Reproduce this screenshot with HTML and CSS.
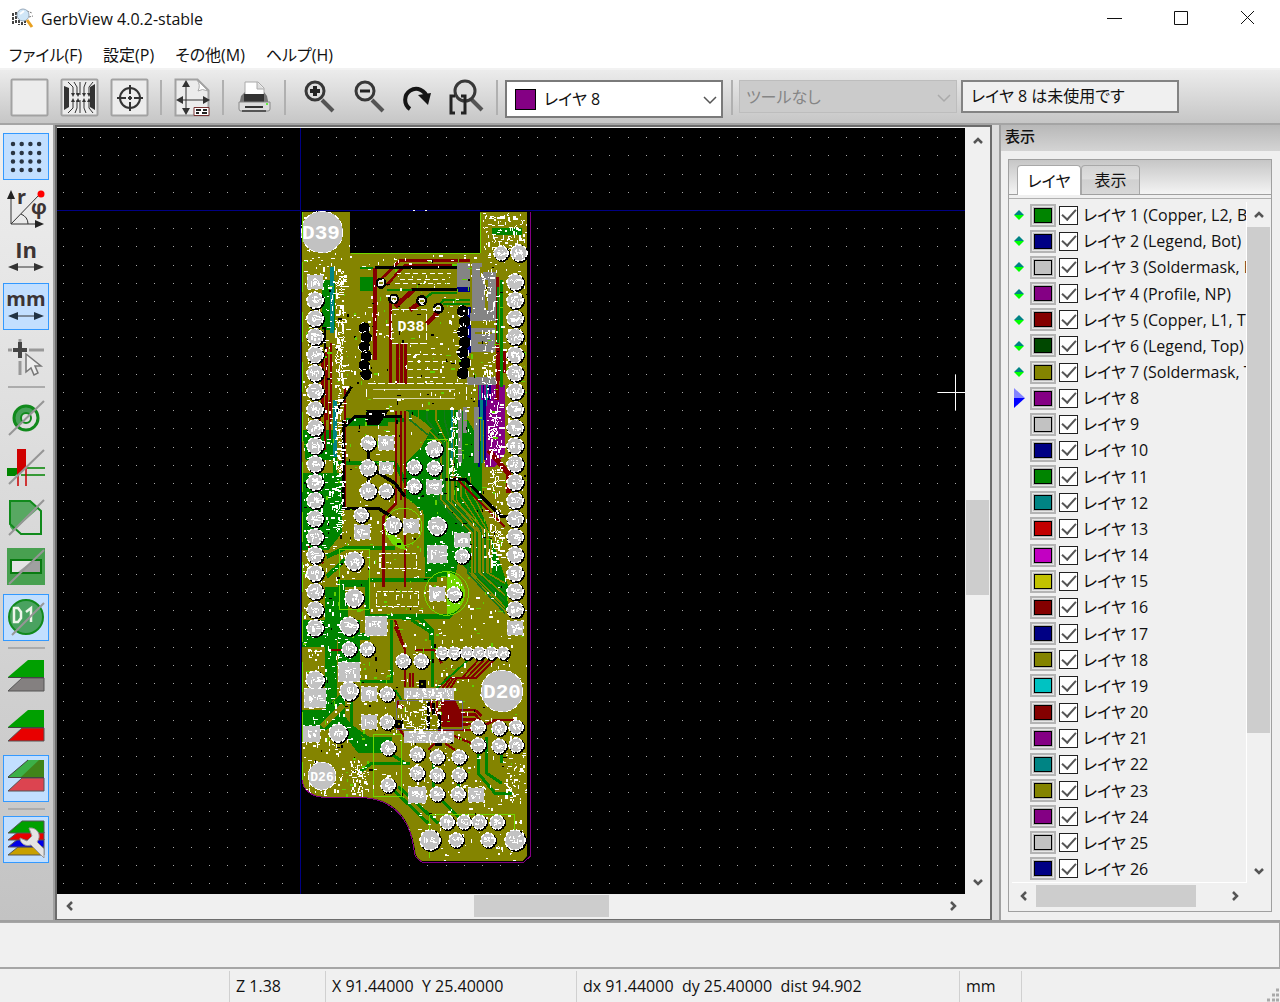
FILE: index.html
```
<!DOCTYPE html>
<html lang="ja">
<head>
<meta charset="utf-8">
<title>GerbView 4.0.2-stable</title>
<link rel="stylesheet" href="styles.css">
</head>
<body>
<header class="titlebar">
  <svg class="app-icon" width="22" height="22" viewBox="0 0 22 22"><path d="M1 5v11M4 4v12M7 8v9M10 10v7M13 12v5" stroke="#444" stroke-width="2" stroke-dasharray="3 1"/><path d="M15 3l5 2M17 9l4-1" stroke="#777" stroke-dasharray="2 1"/><circle cx="11" cy="7" r="6" fill="#cfe6f7" stroke="#9ab" /><path d="M8 6l4-3" stroke="#fff" stroke-width="2"/><path d="M15 12l5 7" stroke="#e8a020" stroke-width="3"/></svg>
  <h1>GerbView 4.0.2-stable</h1>
  <div class="window-buttons">
    <button aria-label="最小化"><svg width="16" height="16"><path d="M0 7.500h15" /></svg></button>
    <button aria-label="最大化"><svg width="16" height="16"><path d="M1.500 0.500h13v13h-13z"/></svg></button>
    <button aria-label="閉じる"><svg width="16" height="16"><path d="M2 0l13 13M15 0L2 13"/></svg></button>
  </div>
</header>
<nav class="menubar">
  <button>ファイル(F)</button><button>設定(P)</button><button>その他(M)</button><button>ヘルプ(H)</button>
</nav>
<div class="toolbar">
  <button aria-label="レイヤを消去"><svg width="40" height="40"><rect class="tile" x="1.500" y="1.500" width="36" height="36" rx="1"/></svg></button>
  <button aria-label="ガーバーファイルを読込む"><svg width="40" height="40"><rect class="tile" x="1.500" y="1.500" width="36" height="36" rx="1"/><path d="M4 8l5 2v19l-5 3zM35 6l-5 3v20l5 3z" fill="#333"/><path class="ln" d="M8 4l5 5v8M14 4l3 5v8M20 4v13M26 4l-2 5v8M33 4l-4 5v8M8 35l5-5v-8M15 35l2-5v-8M20 35V22M26 35l-2-5v-8M33 35l-4-5v-8"/><path d="M11 15h4l-2 4zM16 15h4l-2 4zM22 15h4l-2 4zM27 15h4l-2 4zM11 24h4l-2-4zM16 24h4l-2-4zM22 24h4l-2-4zM27 24h4l-2-4z" fill="#333"/></svg></button>
  <button aria-label="ドリルファイルを読込む"><svg width="40" height="40"><rect class="tile" x="1.500" y="1.500" width="36" height="36" rx="1"/><g class="ln"><circle cx="20" cy="20" r="10" stroke-width="2"/><path stroke-width="2" d="M20 7v9M20 24v9M7 20h9M24 20h9M18 20h4M20 18v4"/></g></svg></button>
  <span class="vsep"></span>
  <button aria-label="ページ設定"><svg width="40" height="40"><path class="tile" d="M3.500 1.500h22l11 11v25h-33z"/><path d="M25 2q4 5 1 11q4-3 10 0z" fill="#fff" stroke="#aaa"/><path class="ln" stroke-width="2" d="M14 5v30M7 22h28"/><path d="M14 2l-4 7h8zM14 37l-4-7h8zM4 22l7-4v8zM38 22l-7-4v8z" fill="#333"/><path d="M22 29.500h15v8H22z" fill="#fff" stroke="#733"/><path d="M24 32h5M31 32h4M24 35h3M30 35h5" stroke="#222" stroke-width="2"/></svg></button>
  <span class="vsep"></span>
  <button aria-label="印刷"><svg width="40" height="40"><path d="M11 4h13l6 6v10H11z" fill="#fff" stroke="#aaa"/><path d="M23 4v7h7" fill="#ddd" stroke="#aaa"/><path d="M7 18l4-4v4h19v-4l3 4 2 10H5z" fill="#777"/><path d="M10 16h20v8H10z" fill="#333"/><path d="M5 24h31v7q0 2-2 2H7q-2 0-2-2z" fill="#ddd" stroke="#888"/><path d="M11 29h18" stroke="#333" stroke-width="2"/><path d="M8 33h24" stroke="#555" stroke-width="2"/><path d="M32 26h2" stroke="#6e4" stroke-width="2"/></svg></button>
  <span class="vsep"></span>
  <button aria-label="ズームイン"><svg class="zoom" width="40" height="40"><path d="M25 22l11 11" stroke="#555" stroke-width="4"/><circle cx="18" cy="13" r="9" fill="#ddd" stroke="#383838" stroke-width="3"/><path d="M13 13h10M18 8v10" stroke="#222" stroke-width="4"/></svg></button>
  <button aria-label="ズームアウト"><svg class="zoom" width="40" height="40"><path d="M25 22l11 11" stroke="#555" stroke-width="4"/><circle cx="18" cy="13" r="9" fill="#ddd" stroke="#383838" stroke-width="3"/><path d="M13 13h10" stroke="#222" stroke-width="3"/></svg></button>
  <button aria-label="再描画"><svg width="40" height="40"><path d="M14 31A11 11 0 1 1 31 20" fill="none" stroke="#151515" stroke-width="4"/><path d="M22 17l13-2-3 12z" fill="#151515"/></svg></button>
  <button aria-label="自動ズーム"><svg width="40" height="40"><path d="M25 21l11 11" stroke="#555" stroke-width="4"/><circle cx="19" cy="13" r="10" fill="#ddd" stroke="#383838" stroke-width="3"/><path d="M9 18H5v17h4M15 18h4v17h-4" fill="none" stroke="#222" stroke-width="3"/></svg></button>
  <span class="vsep"></span>
  <div class="combo layer-combo">
    <i class="combo-color"></i>
    <select aria-label="レイヤ"><option>レイヤ 8</option></select>
    <svg class="caret" width="14" height="10"><path d="M1 2l6 6 6-6"/></svg>
  </div>
  <span class="vsep"></span>
  <div class="combo tool-combo">
    <select aria-label="ツール" disabled><option>ツールなし</option></select>
    <svg class="caret" width="14" height="10"><path d="M1 2l6 6 6-6"/></svg>
  </div>
  <input class="layer-info" aria-label="レイヤ情報" readonly value="レイヤ 8 は未使用です">
</div>

<main>
  <aside class="options">
    <button class="on" aria-label="グリッド"><svg width="46" height="46"><path d="M10 10h27M10 19h27M10 27.500h27M10 36h27" stroke="#2a3542" stroke-width="4.500" stroke-linecap="round" stroke-dasharray="0 8.700"/></svg></button>
    <button aria-label="極座標"><svg width="46" height="46"><path class="ln" stroke-width="2" d="M8 10v30h28M8 40L37 10M18 30q7 3 7 10"/><path d="M8 6l-4 9h8zM41 40l-9-4v8z" fill="#222"/><circle cx="38" cy="10" r="3.500" fill="#f00"/><text x="14" y="20" font-size="20">r</text><text x="28" y="30" font-size="20">φ</text></svg></button>
    <button aria-label="インチ"><svg width="46" height="46"><text x="23" y="24" font-size="22" text-anchor="middle">In</text><path class="ln" stroke-width="2" d="M10 33h27"/><path d="M5 33l10-4v8zM41 33l-10-4v8z" fill="#333"/></svg></button>
    <button class="on" aria-label="ミリメートル"><svg width="46" height="46"><text x="23" y="22" font-size="20" text-anchor="middle">mm</text><path class="ln" stroke-width="2" d="M10 32h27"/><path d="M5 32l10-4v8zM41 32l-10-4v8z" fill="#234"/></svg></button>
    <button aria-label="カーソル形状"><svg width="46" height="46"><path d="M17 5v3M17 27v14M5 16h4M26 16h15" stroke="#999" stroke-width="3"/><path d="M17 8v16M10 16h14" stroke="#444" stroke-width="4"/><path d="M23 20v18l5-4 3 7 4-2-3-7h6z" fill="#eee" stroke="#777" stroke-width="1.500"/></svg></button>
    <span class="hsep"></span>
    <button aria-label="フラッシュパッド"><svg width="46" height="46"><path d="M14 33A13 13 0 0 1 33 14z" fill="#48a058"/><circle cx="23" cy="23" r="12" fill="none" stroke="#118a1c" stroke-width="3"/><circle cx="23" cy="23" r="5" fill="#ddd" stroke="#118a1c" stroke-width="2"/><path class="slash" d="M6 40L41 6"/></svg></button>
    <button aria-label="ライン"><svg width="46" height="46"><path d="M4 23h17L12 31H4z" fill="#008400"/><path d="M14 4h9v19l-9 9z" fill="#d00000"/><path d="M24 23h18M18 30h24" stroke="#008400" stroke-width="1.500"/><path d="M15 29v12M23 21v20" stroke="#c00" stroke-width="1.500"/><path class="slash" d="M6 39L41 5"/></svg></button>
    <button aria-label="ポリゴン"><svg width="46" height="46"><path d="M7 6h21l8 7L10 36l-3-4z" fill="#58a862"/><path d="M7 6h20l11 10v23H18L7 29z" fill="none" stroke="#118a1c" stroke-width="2"/><path class="slash" d="M6 40L41 5"/></svg></button>
    <button aria-label="ネガティブ"><svg width="46" height="46"><rect x="4" y="3" width="38" height="37" fill="#48a050"/><rect x="8" y="15" width="30" height="13" fill="#a0a0a0" stroke="#087a10" stroke-width="2"/><path d="M9 16h20L15 27H9z" fill="#e4e4e4"/><path class="slash" d="M6 39L41 5"/></svg></button>
    <button class="on" aria-label="Dコード"><svg width="46" height="46"><circle cx="23" cy="22" r="17" fill="#4aa260" stroke="#118a1c" stroke-width="2"/><path d="M11 13v14h4l3-4v-6l-3-4zM23 17l5-4v14" fill="none" stroke="#eef5ea" stroke-width="2.500"/><path class="slash" d="M9 40L41 8"/></svg></button>
    <span class="hsep"></span>
    <button aria-label="通常モード"><svg width="46" height="46"><path d="M5 35l14-13h22v13z" fill="#848080" stroke="#555"/><path d="M5 21L25 4h16v17z" fill="#00a000"/><path d="M5 21.500h36" stroke="#444"/></svg></button>
    <button aria-label="スタックモード"><svg width="46" height="46"><path d="M5 35l14-13h22v13z" fill="#e80000" stroke="#555"/><path d="M5 21L25 4h16v17z" fill="#00a000"/><path d="M5 21.500h36" stroke="#444"/></svg></button>
    <button class="on" aria-label="透過モード"><svg width="46" height="46"><path d="M5 35l14-13h22v13z" fill="#dc4450" stroke="#555"/><path d="M5 21L25 4h16v17z" fill="#3cb048"/><path d="M41 4h-5L18 21h23z" fill="#40841a"/><path d="M5 21.500h36M5 21L25 4" stroke="#444"/></svg></button>
    <span class="hsep"></span>
    <button class="on" aria-label="レイヤマネージャ"><svg width="46" height="46"><path d="M5 38l10-8h26v8z" fill="#c8a000" stroke="#555"/><path d="M5 30l10-8h26v8z" fill="#0000e8" stroke="#555"/><path d="M5 23l10-8h26v8z" fill="#e80000" stroke="#555"/><path d="M5 16L19 4h22v12z" fill="#00a000" stroke="#555"/><path d="M26 11c9-1 13 8 8 14l7 7v9L28 28c-6 2-11-2-11-7l7 3 5-5z" fill="#e4e4e4" stroke="#999"/></svg></button>
  </aside>

  <section class="view">
    <svg id="board" class="canvas" role="img" aria-label="ガーバービュー"></svg>
    <div class="scroll vertical"><button aria-label="上へ"><svg width="12" height="12"><path d="M2 8l4-4 4 4"/></svg></button><i></i><b></b><i></i><button aria-label="下へ"><svg width="12" height="12"><path d="M2 4l4 4 4-4"/></svg></button></div>
    <div class="scroll horizontal"><button aria-label="左へ"><svg width="12" height="12"><path d="M8 2L4 6l4 4"/></svg></button><i></i><b></b><i></i><button aria-label="右へ"><svg width="12" height="12"><path d="M4 2l4 4-4 4"/></svg></button></div>
  </section>

  <aside class="manager">
    <h2>表示</h2>
    <div class="notebook">
      <div class="tabs"><button class="active">レイヤ</button><button>表示</button></div>
      <div class="page">
        <ul id="layers" class="layers"></ul>
        <div class="scroll vertical"><button aria-label="上へ"><svg width="12" height="12"><path d="M2 8l4-4 4 4"/></svg></button><b></b><i></i><button aria-label="下へ"><svg width="12" height="12"><path d="M2 4l4 4 4-4"/></svg></button></div>
        <div class="scroll horizontal"><button aria-label="左へ"><svg width="12" height="12"><path d="M8 2L4 6l4 4"/></svg></button><b></b><i></i><button aria-label="右へ"><svg width="12" height="12"><path d="M4 2l4 4-4 4"/></svg></button></div>
      </div>
    </div>
  </aside>
</main>
<div class="messages"></div>
<footer class="status">
  <span></span><span>Z 1.38</span><span>X 91.44000&nbsp; Y 25.40000</span><span>dx 91.44000&nbsp; dy 25.40000&nbsp; dist 94.902</span><span>mm</span><span></span>
  <svg class="grip" width="14" height="14"><path d="M10 2h3M6 7h3M10 7h3M1 12h3M6 12h3M10 12h3" stroke="#aaa" stroke-width="3"/></svg>
</footer>
<script src="app.js"></script>
</body>
</html>
```
FILE: styles.css
```
* { box-sizing: border-box; }
body {
  margin: 0;
  min-height: 100vh;
  display: flex;
  flex-direction: column;
  background: #f0f0f0;
  color: #111;
  font: 16px/24px "Open Sans", "Noto Sans CJK JP", sans-serif;
  font-feature-settings: "palt";
}
button, select, input { font: inherit; font-feature-settings: inherit; color: inherit; }
button { border: 0; padding: 0; background: none; }
svg { display: block; }
.ln { fill: none; stroke: #333; stroke-width: 1; }

.titlebar { display: flex; align-items: center; height: 37px; padding-left: 12px; background: #fff; }
.titlebar h1 { margin: 0 0 0 7px; font-size: 16px; font-weight: 400; }
.window-buttons { display: flex; margin-left: auto; }
.window-buttons button { width: 66px; height: 37px; display: flex; align-items: center; justify-content: center; }
.window-buttons path { fill: none; stroke: #111; stroke-width: 1; }

.menubar { display: flex; gap: 21px; height: 31px; padding: 0 9px; background: #fff; }
.menubar button { height: 35px; white-space: nowrap; }

.toolbar {
  display: flex;
  align-items: flex-start;
  height: 57px;
  padding: 8px 0 0 5px;
  border-top: 2px solid #f2f2f2;
  border-bottom: 2px solid #a4a4a4;
  background: linear-gradient(#ececec, #c6c6c6);
}
.toolbar button { width: 50px; height: 40px; padding-left: 5px; flex: none; }
.tile { fill: #ececec; stroke: #a2a2a2; stroke-width: 2; }
.zoom { margin-left: 1px; }
.vsep { width: 12px; height: 35px; margin-top: 2px; flex: none; background: linear-gradient(#b0b0b0, #b0b0b0) center / 2px 100% no-repeat; }
.combo { position: relative; width: 218px; flex: none; }
.combo select { width: 100%; height: 100%; margin: 0; appearance: none; border-radius: 0; opacity: 1; }
.layer-combo { height: 38px; margin: 2px 3px 0 2px; }
.layer-combo select { padding-left: 37px; border: 2px solid #7a7a7a; background: #fff; }
.combo-color { position: absolute; left: 10px; top: 9px; width: 21px; height: 21px; border: 1px solid #000; background: #840084; }
.caret { position: absolute; right: 6px; top: 50%; margin-top: -4px; fill: none; stroke: #555; stroke-width: 1.500; }
.tool-combo { height: 33px; margin: 2px 4px 0 1px; }
.tool-combo select { padding-left: 6px; border: 1px solid #bdbdbd; background: #cbcbcb; color: #858585; }
.tool-combo .caret { stroke: #aaa; }
.layer-info { width: 218px; height: 33px; margin-top: 2px; padding: 0 8px 3px; border: 2px solid #838383; border-radius: 0; background: #f0f0f0; }

main { flex: 1; display: flex; min-height: 0; background: #dedede; border-bottom: 2px solid #a0a0a0; }
.options {
  width: 55px;
  flex: none;
  display: flex;
  flex-direction: column;
  gap: 3px;
  padding: 8px 3px;
  border-right: 2px solid #a0a0a0;
  background: linear-gradient(#efefef, #c3c3c3);
}
.options button { width: 46px; height: 47px; flex: none; border: 1px solid transparent; }
.options button svg { margin: 0 -1px; }
.options .on { border: 1px solid #3399ff; background: #c2dfff; }
.options text { font-weight: 700; fill: #3c3434; }
.slash { stroke: #969696; stroke-width: 2; fill: none; }
.hsep { height: 2px; margin: 3px 5px; background: #acacac; }

.view {
  flex: 1;
  min-width: 0;
  display: grid;
  grid-template: minmax(0, 1fr) 25px / minmax(0, 1fr) 25px;
  padding-top: 1px;
  border: 2px solid #6c6c6c;
  border-bottom-width: 1px;
  background: #f0f0f0;
}
.canvas { width: 100%; height: 100%; background: #000; }

.scroll { display: grid; background: #f0f0f0; }
.scroll b { background: #cdcdcd; }
.scroll button { display: grid; place-items: center; }
.scroll path { fill: none; stroke: #555; stroke-width: 2.500; }
.view .vertical { grid-template-rows: 25px 347fr 95fr 274fr 25px; padding: 0 1px; }
.view .horizontal { grid-template-columns: 25px 392fr 135fr 331fr 25px; padding: 1px 0 2px; }

.manager { width: 281px; flex: none; margin-left: 7px; border-left: 2px solid #a0a0a0; background: #f0f0f0; display: flex; flex-direction: column; }
.manager h2 { height: 26px; margin: 0; padding-left: 4px; font-size: 15px; line-height: 22px; font-weight: 500; background: linear-gradient(#b8b8b8, #d4d4d4); }
.notebook { flex: 1; display: flex; flex-direction: column; margin: 8px 8px 8px 7px; border: 1px solid #a0a0a0; }
.tabs { display: flex; height: 35px; padding: 5px 8px 0; background: linear-gradient(#c6c6c6, #f4f4f4); border-bottom: 1px solid #a0a0a0; }
.tabs button { width: 59px; border: 1px solid #a8a8a8; border-bottom: 0; border-radius: 4px 4px 0 0; background: linear-gradient(#d4d4d4, #dedede 45%, #d0d0d0 50%, #d8d8d8); }
.tabs .active { width: 64px; height: 30px; background: #fff; }
.page { flex: 1; display: grid; grid-template: minmax(0, 1fr) 24px / minmax(0, 1fr) 23px; margin-top: 3px; padding: 3px 1px 4px 3px; border-top: 1px solid #b0b0b0; }
.layers { list-style: none; margin: 0; padding: 0; overflow: hidden; display: flex; flex-direction: column; border-right: 1px solid #fff; border-bottom: 1px solid #fff; }
.layers li { flex: 1 1 26px; display: flex; align-items: center; white-space: nowrap; }
.marker { width: 18px; padding-right: 4px; flex: none; display: grid; place-items: center; }
.swatch { width: 26px; height: 23px; flex: none; display: grid; place-items: center; border: 2px solid #b4b4b4; background: #e6e6e6; }
.swatch i { width: 18px; height: 15px; border: 1px solid #000; outline: 1px solid #bbb; }
.layers label { display: flex; align-items: center; }
.layers input { appearance: none; width: 19px; height: 19px; margin: 0 5px 0 3px; flex: none; display: grid; place-items: center; border: 1px solid #222; background: #fff; }
.layers input:checked::before { content: ""; width: 12px; height: 6px; margin-bottom: 4px; border: solid #555; border-width: 0 0 2px 2px; transform: rotate(-48deg); }
.page .vertical { grid-template-rows: 25px 507fr 126fr 24px; }
.page .horizontal { grid-template-columns: 24px 160fr 27fr 24px; padding-top: 2px; }

.messages { height: 47px; border: solid #a6a6a6; border-width: 1px 1px 2px 0; }
.status { position: relative; display: grid; grid-template-columns: 230px 96px 251px 383px 62px 1fr; height: 33px; padding: 2px 0; }
.status span { padding-left: 6px; line-height: 31px; border-right: 1px solid #d0d0d0; white-space: pre; }
.status span:nth-child(6) { border: 0; }
.grip { position: absolute; right: 0; bottom: 0; }
```
FILE: app.js
```
const palette = {
  g: '#008400', b: '#000084', s: '#c2c2c2', p: '#840084', r: '#840000', d: '#004800', o: '#848400',
  t: '#008484', R: '#c20000', P: '#c200c2', y: '#c2c200', c: '#00c2c2'
};

/* Layer list */
const layerColors = 'gbsprdopsbgtRPyrbocrptopsb';
const layerNotes = ['Copper, L2, Bot', 'Legend, Bot', 'Soldermask, Bot', 'Profile, NP', 'Copper, L1, Top', 'Legend, Top', 'Soldermask, Top'];
document.getElementById('layers').innerHTML = [...layerColors].map((key, i) => {
  const note = layerNotes[i] ? ` (${layerNotes[i]})` : '';
  let mark = '';
  if (i < 7) mark = '<svg width="10" height="10"><path d="M0 5l5-5 5 5z" fill="#008484"/><path d="M0 5l5 5 5-5z" fill="#0f0"/></svg>';
  if (i === 7) mark = '<svg width="12" height="20"><path d="M1 0l11 10H1z" fill="#8484ff"/><path d="M1 20l11-10H1z" fill="#00f"/></svg>';
  return `<li><span class="marker">${mark}</span><button class="swatch" aria-label="色 ${i + 1}"><i style="background:${palette[key]}"></i></button><label><input type="checkbox" checked>レイヤ ${i + 1}${note}</label></li>`;
}).join('');

/* Board drawing */
let seed = 7;
const rnd = () => (seed = (seed * 16807) % 2147483647) / 2147483647;
const line = (d, color, w) => `<path d="${d}" fill="none" stroke="${color}" stroke-width="${w}"/>`;
const area = (d, color) => `<path d="${d}" fill="${color}"/>`;

function grid() {
  let d = '';
  for (let i = -13; i < 95; i++) for (let j = -4; j < 70; j++) {
    if (i && j) d += `M${Math.round(300 + i * 18.2)} ${Math.round(210 + j * 18.2)}h1v1h-1z`;
  }
  return area(d, '#a8a8a8');
}
function noise(x, y, w, h, n, color, len = 4) {
  let d = '';
  for (let i = 0; i < n; i++) {
    const px = Math.round(x + rnd() * w), py = Math.round(y + rnd() * h), l = 1 + Math.round(rnd() * len);
    const t = rnd() < .3 ? 2 : 1;
    d += rnd() < .5 ? `M${px} ${py}h${l}v${t}h-${l}z` : `M${px} ${py}v${l}h${t}v-${l}z`;
  }
  return area(d, color);
}
function pad(x, y, r, square) {
  const shape = square
    ? `<rect x="${x - r}" y="${y - r * .9}" width="${2 * r}" height="${1.8 * r}" fill="#c2c2c2" stroke="#fff" stroke-dasharray="3 4"/>`
    : `<circle cx="${x + 1}" cy="${y + 1}" r="${r + 1}" fill="#000"/><circle cx="${x}" cy="${y}" r="${r}" fill="#c2c2c2" stroke="#fff" stroke-width="1.500" stroke-dasharray="4 2"/>`;
  return shape + noise(x - r * .6, y - r * .5, r * 1.1, r * .7, 12, '#fff', r * .4);
}
const bigLabel = (x, y, size, t) => `<text x="${x}" y="${y}" font-size="${size}" fill="#fff" font-family="Liberation Mono, monospace" font-weight="700" text-anchor="middle">${t}</text>`;

const outline = 'M302 212H350V253H480V212H527V856L523 861H422Q415 858 415 850C410 815 392 798 360 797H325Q305 796 302 782Z';
let s = '<g clip-path="url(#edge)">' + area(outline, palette.o);

/* Upper part: connector, traces and vias */
s += '<g transform="translate(295 200) scale(.33333)">';
s += area('M195 200h40v8h-40zM195 232h50v42h-50zM80 240h40v150h-40z', palette.g);
s += area('M104 200h14v200h-14z', palette.t);
s += area('M590 85h90v20h-90z', palette.g);
s += line('M240 205V480', palette.r, 11) + line('M255 240L315 182H525M275 255L330 195H525', palette.r, 8);
s += line('M300 320L355 270M345 330L385 300M395 372L440 325', palette.r, 14);
s += line('M287 310V552M307 432V552M320 432V552M332 432V552', palette.r, 8);
s += line('M240 204H525M350 270H485', '#000', 9) + line('M275 270H350M380 302L410 280H485M430 322L445 300H525M445 312H525', palette.g, 7);
s += line('M487 270H525', palette.b, 15) + area('M487 190h38v72h-38z', '#848484') + area('M497 320h30v140h-30z', palette.b);
for (let i = 0; i < 6; i++) s += `<circle cx="${208 + i % 2 * 6}" cy="${384 + i * 28}" r="17" stroke="#fff" stroke-width="3" stroke-dasharray="10 24"/>`;
for (let i = 0; i < 7; i++) s += `<circle cx="${504 + i % 2 * 6}" cy="${334 + i * 31}" r="18" stroke="#fff" stroke-width="3" stroke-dasharray="10 24"/>`;
s += area('M530 190h30v150h-30zM560 215h42v125h-42zM525 340h78v24h-78zM528 385h72v70h-72zM515 530h90v24h-90z', '#848484');
s += line('M560 200v30M575 240v90M540 400h50M550 430h30', palette.o, 7);
s += area('M550 555h80v105h-80z', palette.p) + line('M556 555v105M576 555v105', palette.t, 5) + line('M566 555v105M586 555v60', palette.b, 5);
s += line('M607 230V640M618 440L600 660M628 450V520', palette.r, 8) + line('M82 460V620M95 440V660M108 430V660M150 560V660', palette.r, 8);
s += line('M620 240V560M610 260V430', palette.g, 7) + line('M90 380V450M120 640L170 560', '#000', 8);
s += line('M235 568H480M235 595H480', '#fff', 2) + line('M220 552H520M215 590V560M515 560V600M290 330H395V430H290Z', '#fff', 3).replace('/>', ' stroke-dasharray="22 7"/>');
s += line('M305 222H480M315 238H450M300 250H470M335 465H440M340 485H470M340 508H440M340 532H450', '#fff', 3).replace('/>', ' stroke-dasharray="14 11"/>');
for (const [x, y] of [[258, 250], [296, 297], [380, 302], [430, 325]]) s += `<circle cx="${x}" cy="${y}" r="13" fill="#eee" stroke="#000" stroke-width="7"/><path d="M${x - 6} ${y}h12" stroke="#848400" stroke-width="6"/>`;
s += line('M167 40V160H556V40', '#70d800', 3);
s += '</g>';

/* Middle part */
s += '<g transform="translate(295 400) scale(.33333)">';
s += area('M22 90h100v90h-90zM22 220H140V400L100 450H22zM440 30h60L560 130V330L640 560V640L480 470V360L380 330 330 290V190L380 140z', palette.g);
s += area('M385 320H460L530 410 500 440 480 530H390zM130 540H225V720H130zM30 560H130V720H90V560zM330 30H450V120L380 60z', palette.g);
s += area('M160 610h50v90h-50zM150 560h60v40h-60z', palette.o);
for (let i = 0; i < 6; i++) s += line(`M${345 + i * 26} 30V60L${430 + i * 9} 130V300L${520 + i * 12} 400V520L630 ${640 - i * 18}`, i % 2 ? palette.o : '#14781a', 5);
for (let i = 0; i < 5; i++) s += line(`M${470 + i * 14} 230V${310 - i * 10}L${540 + i * 12} 390V520`, palette.o, 4);
s += line('M95 470L150 445H300M95 530L150 480M220 540H420V480M220 650H460L490 620M320 655H375L410 690V720M150 60H330M150 72H280M130 190H300L380 330', palette.g, 13);
s += line('M303 32V310L265 350V560M318 32V300M330 32V560M150 40V320', palette.r, 8) + line('M75 30V160M90 30V150M105 0V120M40 440L85 490M480 230L630 380', palette.r, 6);
s += line('M146 60V325H250L290 350M150 78L180 50H320M220 140V270M245 215L300 250 330 290M450 238H510L620 350H640', '#000', 10);
s += area('M212 30h70l-30 45h-40z', '#000');
s += area('M575 0h55v160l-30 40h-30z', palette.p) + line('M552 0V200M570 0V180', palette.b, 5) + line('M560 0V190M470 30V180', palette.t, 6);
s += line('M545 20V190M495 30V190M510 20V100', '#848484', 13) + line('M580 150L640 220V280', palette.r, 15) + line('M120 0V380', palette.t, 10) + line('M120 170V390', palette.g, 12);
s += '<circle cx="325" cy="380" r="56" fill="none" stroke="#70d800" stroke-width="3"/><path d="M455 515A66 66 0 0 1 455 645z" fill="#70d800"/><circle cx="455" cy="580" r="66" fill="none" stroke="#70d800" stroke-width="3"/><path d="M275 395q10 50 60 55l-15-30z" fill="#70d800"/>';
s += line('M133 448H223V628H133ZM395 120H460V300', '#70d800', 3) + line('M255 460H365V505H255ZM245 575H370V620H245Z', '#fff', 4).replace('/>', ' stroke-dasharray="14 5"/>');
s += '</g>';

/* Lower part */
s += '<g transform="translate(295 620) scale(.33333)">';
s += area('M22 0h70v80h-70zM130 0h65v130h-65zM22 270H90L150 210V290L200 350H290V400H190L130 320 90 330H22zM90 0h35v230l-35 40z', palette.g);
s += line('M80 320L145 255', palette.o, 18) + line('M290 0V185H195M350 0L412 40V200M170 230V320L330 430M195 455L230 430H345M285 500L400 610M310 500L430 610M430 530L500 600M415 420V500M490 430V500M550 400V460L600 520H650M575 350V460L620 490M200 390H260M620 380V430', palette.g, 9);
s += line('M300 0L330 90V200M345 160V200M355 160V200M360 90H420L440 130M300 20L325 80M430 330H540L600 300H660M430 315H520M310 240V260H325M300 310L330 350M400 390L430 360M450 370L480 390M100 90h50M470 345L530 370', palette.r, 7);
for (let i = 0; i < 4; i++) s += line(`M${430 + i * 12} 205L${455 + i * 10} 175H${500 + i * 14}L${550 + i * 16} 120`, palette.r, 6) + line(`M${410 + i * 16} 240V${270 + i * 14}H540l20 ${18 + i * 4}`, palette.r, 8);
s += line('M425 205L520 120M300 210L320 240', palette.g, 6) + area('M440 240h40l20 40v40h-60z', palette.r) + area('M328 203h148v35h-148zM328 332h148v36h-148z', '#c2c2c2');
s += line('M400 245V330M415 250V285M435 280V330M420 375h20', '#000', 9) + line('M305 243H502V330H305Z', '#6060c0', 2);
s += line('M235 345V530H320V345ZM405 715V585H660V690', '#70d800', 3) + line('M375 185h14v14h-14zM305 305h14v14h-14z', '#000', 8);
s += '</g>';

/* Silkscreen texture */
s += noise(303, 213, 223, 580, 900, '#fff', 3) + noise(303, 258, 45, 540, 380, '#fff', 4) + noise(415, 780, 110, 80, 90, '#fff', 3);
s += noise(335, 268, 8, 122, 110, '#fff', 7) + noise(482, 268, 14, 130, 90, '#fff', 4) + noise(335, 395, 7, 140, 110, '#fff', 5);
s += noise(449, 400, 8, 80, 60, '#fff', 5) + noise(488, 400, 13, 165, 160, '#fff', 6) + noise(400, 700, 40, 30, 90, '#fff', 4) + noise(350, 760, 15, 35, 50, '#fff', 4);
s += noise(483, 213, 44, 45, 110, '#fff', 4) + noise(303, 258, 223, 560, 160, '#000', 3) + noise(303, 258, 223, 540, 250, '#60d000', 4) + noise(505, 750, 20, 50, 50, '#fff', 3);
s += noise(405, 688, 48, 11, 50, '#fff', 4) + noise(405, 731, 48, 11, 50, '#fff', 4);
s += '</g>';

/* Pads */
for (let i = 0; i < 20; i++) {
  const y = 282 + i * 18.2;
  s += pad(315, y, 8, i === 0) + pad(515, y, 8, i === 19);
}
const pads = [
  [368, 443, 7], [386, 443, 8, 1], [368, 468, 8], [386, 468, 7, 1], [368, 491, 8], [386, 491, 7], [434, 449, 8], [414, 467, 7], [434, 468, 7], [414, 486, 7], [434, 487, 8, 1],
  [361, 515, 7], [362, 532, 8, 1], [393, 525, 8], [411, 526, 8, 1], [437, 526, 9], [437, 554, 10, 1], [462, 540, 8, 1], [462, 556, 7], [354, 561, 9], [354, 598, 9], [437, 594, 8, 1], [454, 594, 7], [349, 626, 9], [376, 626, 11, 1],
  [349, 649, 7], [367, 649, 7], [403, 661, 7], [421, 661, 7], [442, 653, 6], [454, 653, 6], [467, 653, 6], [479, 653, 6], [491, 653, 6], [503, 653, 6], [349, 672, 11, 1], [349, 691, 9], [369, 694, 8, 1], [387, 694, 7],
  [315, 680, 9], [315, 698, 11, 1], [369, 722, 8, 1], [387, 722, 7], [311, 734, 9, 1], [338, 733, 9], [388, 748, 7], [388, 785, 7], [417, 754, 7], [437, 757, 7], [459, 757, 7], [417, 773, 7], [437, 775, 7], [459, 775, 7],
  [417, 795, 9, 1], [437, 794, 7], [458, 794, 7], [476, 795, 8, 1], [478, 727, 7], [499, 728, 7], [516, 727, 7], [478, 745, 7], [499, 746, 7], [516, 745, 7], [447, 822, 7], [464, 822, 7], [479, 822, 7], [497, 822, 7],
  [430, 840, 10], [456, 840, 7], [488, 840, 7], [515, 840, 10], [501, 253, 7], [519, 253, 8]
];
for (const p of pads) s += pad(...p);
s += '<g fill="#c2c2c2" stroke="#fff" stroke-dasharray="5 3"><circle cx="322" cy="232" r="21"/><circle cx="502" cy="691" r="21"/><circle cx="322" cy="776" r="14"/></g>';
s += bigLabel(321, 239, 21, 'D39') + bigLabel(502, 698, 21, 'D20') + bigLabel(322, 781, 13, 'D26') + bigLabel(411, 331, 15, 'D38');
s += '<path d="M530.5 212V856L524 862H422Q414 858 414 850C410 816 390 798 360 797.500H325Q304 796 302 780" fill="none" stroke="#840084"/>';
s += line('M302.500 212V780', '#70d800', 1).replace('/>', ' stroke-dasharray="30 20"/>');

document.getElementById('board').innerHTML =
  `<defs><clipPath id="edge"><path d="${outline}"/></clipPath></defs><g transform="translate(-57 -128)" shape-rendering="crispEdges">${grid()}${s}` +
  line('M300.500 0V3000M0 210.500H4000', palette.b, 1) + line('M938 392.500H974M955.500 375V410', '#fff', 1) + area('M413 210h2v1h-2zM425 210h2v1h-2z', '#fff') + '</g>';
```
